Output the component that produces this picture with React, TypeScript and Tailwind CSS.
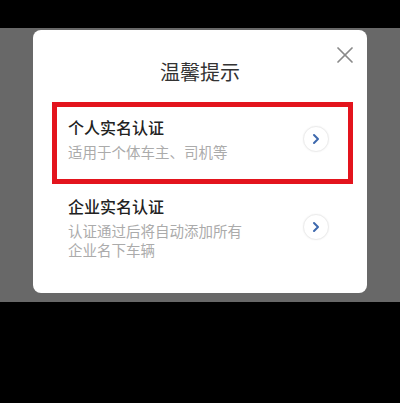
import { X } from 'lucide-react';

const font = { fontFamily: '"Noto Sans CJK SC", "Noto Sans", sans-serif' };

function Chevron() {
  return (
    <div className="flex h-[26px] w-[26px] shrink-0 items-center justify-center rounded-full border border-[#ececec] bg-white shadow-[0_0_2px_rgba(0,0,0,0.06)]">
      <svg width="10" height="12" viewBox="0 0 10 12" fill="none">
        <path d="M3 2 L7 6 L3 10" stroke="#3d68ad" strokeWidth="2" strokeLinecap="round" strokeLinejoin="round" />
      </svg>
    </div>
  );
}

export default function App() {
  return (
    <div className="h-[403px] w-[400px] overflow-hidden bg-black" style={font}>
      <div className="h-[28px] bg-black" />
      <div className="h-[274px] bg-[#686868] pt-[2px]">
        <div className="relative mx-[33px] h-[263px] rounded-lg bg-white">
          <button className="absolute right-[8px] top-[11px] text-[#8a8a8a]">
            <X size={28} strokeWidth={1.5} />
          </button>

          <h2 className="pt-[28px] text-center text-[20px] leading-[28px] text-[#333]">温馨提示</h2>

          <div className="ml-[19px] mr-[14px] mt-[16px]">
            {/* highlighted option */}
            <div className="flex items-center justify-between border-[5px] border-[#e3141d] pb-[17px] pl-[11px] pr-[19px] pt-[9px]">
              <div>
                <p className="text-[16px] font-medium leading-[22px] text-[#222]">个人实名认证</p>
                <p className="mt-[4px] text-[14.5px] leading-[20px] text-[#ababab]">适用于个体车主、司机等</p>
              </div>
              <Chevron />
            </div>

            <div className="flex items-center justify-between border-[5px] border-transparent pl-[11px] pr-[19px] pt-[6px]">
              <div>
                <p className="text-[16px] font-medium leading-[22px] text-[#222]">企业实名认证</p>
                <p className="mt-[4px] text-[14.5px] leading-[19px] text-[#ababab]">
                  认证通过后将自动添加所有
                  <br />
                  企业名下车辆
                </p>
              </div>
              <Chevron />
            </div>
          </div>
        </div>
      </div>
    </div>
  );
}
